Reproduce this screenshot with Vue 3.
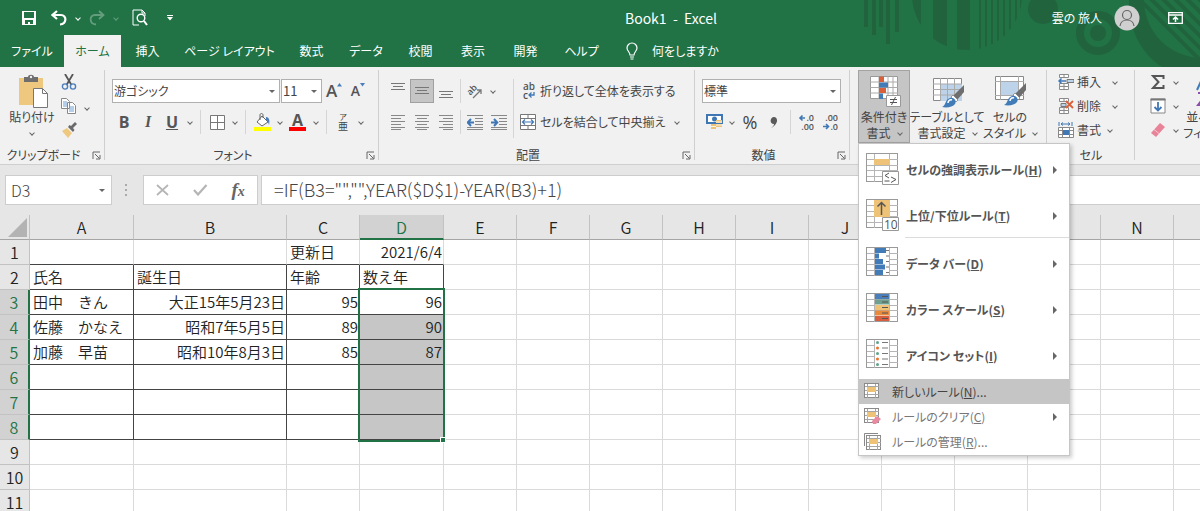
<script setup>
import { ref } from "vue";

const tabs = ["ファイル", "ホーム", "挿入", "ページ レイアウト", "数式", "データ", "校閲", "表示", "開発", "ヘルプ"];
const activeTab = ref("ホーム");

const fontName = ref("游ゴシック");
const fontSize = ref("11");
const numberFormat = ref("標準");
const nameBox = ref("D3");
const formula = ref('=IF(B3="","",YEAR($D$1)-YEAR(B3)+1)');

// 条件付き書式メニュー
const bigItems = [
  { id: "highlight", label: "セルの強調表示ルール", key: "H" },
  { id: "rank", label: "上位/下位ルール", key: "T", divider: true },
  { id: "bars", label: "データ バー", key: "D" },
  { id: "scale", label: "カラー スケール", key: "S" },
  { id: "icons", label: "アイコン セット", key: "I" },
];
const smallItems = [
  { id: "new", label: "新しいルール", key: "N", dots: true, active: true },
  { id: "clear", label: "ルールのクリア", key: "C", arrow: true },
  { id: "manage", label: "ルールの管理", key: "R", dots: true },
];

const cellTools = [
  { id: "insert", label: "挿入" },
  { id: "delete", label: "削除" },
  { id: "format", label: "書式" },
];

const scaleColors = ["#4a7ebb", "#6fa08f", "#efc377", "#e8893c", "#d75f3f"];
const dotColors = ["#5fa58c", "#e8742c", "#5fa58c", "#e8742c", "#5fa58c"];
const barWidths = [11, 4, 8, 10, 8];

// シート
const columns = ["A", "B", "C", "D", "E", "F", "G", "H", "I", "J", "K", "L", "M", "N", "O"];
const sheet = {
  1: { C: "更新日", D: "2021/6/4" },
  2: { A: "氏名", B: "誕生日", C: "年齢", D: "数え年" },
  3: { A: "田中　きん", B: "大正15年5月23日", C: "95", D: "96" },
  4: { A: "佐藤　かなえ", B: "昭和7年5月5日", C: "89", D: "90" },
  5: { A: "加藤　早苗", B: "昭和10年8月3日", C: "85", D: "87" },
};

const inTable = (row, col) => row >= 2 && row <= 8 && "ABCD".includes(col);

function cellClass(row, col) {
  return {
    boxed: inTable(row, col),
    "boxed-top": row === 1 && "ABCD".includes(col),
    right: (row === 1 && col === "D") || (row >= 3 && "BCD".includes(col)),
    picked: col === "D" && row >= 4 && row <= 8,
  };
}
</script>

<template>
  <div class="excel">
    <svg class="symbols" aria-hidden="true">
      <symbol id="launcher" viewBox="0 0 9 9">
        <path d="M1 8V1h7M3 3l4.500 4.500M8 4v4H4" fill="none" stroke="#666" />
      </symbol>
      <symbol id="grid" viewBox="0 0 34 34">
        <rect x=".5" y=".5" width="31" height="28" fill="#fff" stroke="#9a9a9a" />
        <path d="M8.500 1v28M23.500 1v28M1 6.500h31M1 12.500h31M1 17.500h31M1 23.500h31" stroke="#b5b5b5" fill="none" />
      </symbol>
      <symbol id="rule" viewBox="0 0 17 17">
        <rect x=".5" y=".5" width="14" height="14" fill="#fff" stroke="#8a8a8a" />
        <path d="M3.500 1v14M11.500 1v14M1 3.500h14M1 7.500h14M1 11.500h14" stroke="#a5a5a5" fill="none" />
        <rect x="3" y="4" width="9" height="5" fill="#efc377" />
      </symbol>
      <symbol id="brush" viewBox="0 0 24 24">
        <path d="M23 1v7l-7 8-4-4z" fill="#6e6e6e" />
        <path d="M12 11l5 5-2 2-5-5z" fill="#fff" stroke="#777" stroke-width=".7" />
        <path d="M1 23c4-1 3-8 8-9 4-1 7 3 5 6-2 3-8 4-13 3z" fill="#417bb8" />
        <path d="M7 19c0-2 2-4 4-3" stroke="#fff" stroke-width="1.500" fill="none" />
      </symbol>
      <symbol id="cells" viewBox="0 0 10 16">
        <path d="M.5.5h9v3h-9zM.5 12.500h9v3h-9zM.5 9.500h9v3M5 .5v3M5 9.500v6M.5 9.500v3" stroke="#8a8a8a" fill="#fff" />
      </symbol>
    </svg>

    <header class="top">
      <svg class="art" viewBox="0 0 360 67" aria-hidden="true">
        <defs>
          <clipPath id="disc"><circle cx="127" cy="-5" r="55" /></clipPath>
          <clipPath id="bowl"><circle cx="362" cy="0" r="58" /></clipPath>
        </defs>
        <g fill="#21633d">
          <path d="M24 0h4v27h-4zM32 0h4v35h-4zM39 0h4v27h-4zM46 0h4v44h-4zM55 0h4v32h-4z" />
          <g clip-path="url(#disc)">
            <path d="M70 0h11v28H70zM93 0h14v60H93zM117 0h13v60h-13zM139 0h2v60h-2zM145 0h2v60h-2zM151 0h2v60h-2zM157 0h2v60h-2zM163 0h2v60h-2zM169 0h2v60h-2zM175 0h2v60h-2zM180 0h2v60h-2z" />
          </g>
          <circle cx="203" cy="9" r="15" />
          <circle cx="258" cy="33" r="8" />
          <path d="M289 0h71v67h-38c-22-14-34-40-33-67z" />
        </g>
        <circle cx="258" cy="33" r="18" fill="none" stroke="#21633d" stroke-width="8" />
        <circle cx="362" cy="0" r="58" fill="#217346" />
        <g clip-path="url(#bowl)" stroke="#21633d" stroke-width="4">
          <path d="M300 0l70 70M310-2l70 70M320-4l70 70M330-6l70 70M340-8l70 70M350-10l70 70" />
        </g>
      </svg>

      <div class="titlebar">
        <div class="quick">
          <button class="q" aria-label="上書き保存">
            <svg width="16" height="16" viewBox="0 0 16 16">
              <path d="M1 1h14v14H1z" fill="#fff" />
              <path d="M3 2h10v6H3zM4 10h8v4H9v-2H7v2H4z" fill="#217346" />
            </svg>
          </button>
          <button class="q undo" aria-label="元に戻す">
            <svg width="16" height="16" viewBox="0 0 16 16">
              <path d="M6 1L1.500 5 6 9M2 5h8c6 0 6 9-1 9.500" fill="none" stroke="#fff" stroke-width="2.200" />
            </svg>
          </button>
          <button class="chev light" aria-label="元に戻す履歴"></button>
          <button class="q faded" aria-label="やり直し">
            <svg width="16" height="16" viewBox="0 0 16 16">
              <path d="M10 1l4.500 4L10 9M14 5H6c-6 0-6 9 1 9.500" fill="none" stroke="#fff" stroke-width="1.800" />
            </svg>
          </button>
          <button class="chev light faded" aria-label="やり直し履歴"></button>
          <button class="q preview" aria-label="印刷プレビュー">
            <svg width="16" height="17" viewBox="0 0 16 17">
              <path d="M7 16H1V1h9l3 3v3M10 1v3h3" fill="none" stroke="#fff" />
              <circle cx="9" cy="9" r="3.800" fill="none" stroke="#fff" stroke-width="1.400" />
              <path d="M12 12l3 4" stroke="#fff" stroke-width="2" />
            </svg>
          </button>
          <button class="q" aria-label="クイック アクセス ツール バーのユーザー設定">
            <svg width="6" height="6" viewBox="0 0 6 6"><path d="M0 0h6v1H0zM0 2h6L3 5.500z" fill="#fff" /></svg>
          </button>
        </div>
        <h1>Book1&nbsp; -&nbsp; Excel</h1>
        <div class="account">
          <span>雲の 旅人</span>
          <svg width="26" height="26" viewBox="0 0 26 26">
            <circle cx="13" cy="13" r="12.500" fill="#d0d0d0" />
            <circle cx="13" cy="10" r="4.500" fill="none" stroke="#666" stroke-width="1.200" />
            <path d="M6 21c1-8 13-8 14 0" fill="none" stroke="#666" stroke-width="1.200" />
          </svg>
          <button class="q" aria-label="リボンの表示オプション">
            <svg width="15" height="12" viewBox="0 0 15 12">
              <path d="M.7.7h13.600v10.600H.7zM1 3h13" fill="none" stroke="#fff" stroke-width="1.300" />
              <path d="M7.500 10V5M5 7.500L7.500 5 10 7.500" fill="none" stroke="#fff" stroke-width="1.500" />
            </svg>
          </button>
        </div>
      </div>

      <nav class="tabs">
        <button
          v-for="tab in tabs"
          :key="tab"
          :class="['tab', { active: tab === activeTab }]"
          @click="activeTab = tab"
        >
          {{ tab }}
        </button>
        <button class="tell">
          <svg width="12" height="18" viewBox="0 0 12 18">
            <path d="M4 13c0-3-3-4-3-7a5 5 0 0 1 10 0c0 3-3 4-3 7zM4 15h4M4.500 17h3" fill="none" stroke="#fff" stroke-width="1.200" />
          </svg>
          何をしますか
        </button>
      </nav>
    </header>

    <section class="ribbon">
      <div class="group clipboard">
        <div class="body stack">
          <button class="paste">
            <svg width="32" height="34" viewBox="0 0 32 34">
              <path d="M3 4h24v27H3z" fill="#efc880" />
              <path d="M8 3h4c0-3 6-3 6 0h4v5H8z" fill="#6e6e6e" />
              <circle cx="15" cy="3" r="1.200" fill="#f1f1f1" />
              <path d="M17.500 14.500h9l5 5v14h-14z" fill="#fff" stroke="#777" />
              <path d="M26.500 14.500v5h5" fill="none" stroke="#777" />
            </svg>
            <span>貼り付け</span>
            <i class="down"></i>
          </button>
          <div class="minis">
            <button class="tool" aria-label="切り取り">
              <svg width="16" height="16" viewBox="0 0 16 16">
                <path d="M4 0l6.500 11M12 0L5.500 11" stroke="#555" stroke-width="1.800" />
                <circle cx="4" cy="12.500" r="2.600" fill="none" stroke="#4a7ebb" stroke-width="1.400" />
                <circle cx="12" cy="12.500" r="2.600" fill="none" stroke="#4a7ebb" stroke-width="1.400" />
              </svg>
            </button>
            <button class="tool" aria-label="コピー">
              <svg width="16" height="16" viewBox="0 0 16 16">
                <path d="M.5.5h5l3 3v7h-8zM6.500 4.500h5l3 3v8h-8z" fill="#fff" stroke="#888" />
                <path d="M2 4h4M2 6h4M2 8h4M8 9h5M8 11h5M8 13h5" stroke="#6b9bd1" />
              </svg>
            </button>
            <button class="tool" aria-label="書式のコピー/貼り付け">
              <svg width="16" height="16" viewBox="0 0 16 16">
                <path d="M1 9l5-3 5 5-4 5z" fill="#efc880" />
                <path d="M7 5l5 5 1.500-2-1.500-2 4-4-2-2-4 4L8.500 3z" fill="#6a6a6a" />
              </svg>
            </button>
          </div>
          <button class="chev mid" aria-label="コピーのオプション"></button>
        </div>
        <footer>
          <span>クリップボード</span>
          <button class="launch" aria-label="クリップボードの設定"><svg width="9" height="9"><use href="#launcher" /></svg></button>
        </footer>
      </div>

      <div class="group font">
        <div class="body lines">
          <div class="line">
            <label class="combo wide">
              <select v-model="fontName" aria-label="フォント"><option>游ゴシック</option></select>
            </label>
            <label class="combo narrow">
              <select v-model="fontSize" aria-label="フォント サイズ"><option>11</option></select>
            </label>
            <button class="tool grow" aria-label="フォント サイズの拡大">
              A<svg width="5" height="4" viewBox="0 0 5 4"><path d="M0 3.500h5L2.500 0z" fill="#4a7ebb" /></svg>
            </button>
            <button class="tool grow small" aria-label="フォント サイズの縮小">
              A<svg width="5" height="4" viewBox="0 0 5 4"><path d="M0 0h5L2.500 3.500z" fill="#4a7ebb" /></svg>
            </button>
          </div>
          <div class="line">
            <button class="tool bold">B</button>
            <button class="tool italic">I</button>
            <button class="tool under">U</button>
            <button class="chev" aria-label="下線の種類"></button>
            <i class="sep"></i>
            <button class="tool" aria-label="罫線">
              <svg width="15" height="15" viewBox="0 0 15 15"><path d="M.5.5h14v14H.5zM7.500 0v15M0 7.500h15" fill="#fff" stroke="#777" /></svg>
            </button>
            <button class="chev" aria-label="罫線の種類"></button>
            <i class="sep"></i>
            <button class="tool" aria-label="塗りつぶしの色">
              <svg width="17" height="18" viewBox="0 0 17 18">
                <path d="M8 3l6 6-6 4-5-4z" fill="#fff" stroke="#666" />
                <path d="M6 7V2c0-2 3-2 3 0v3" fill="none" stroke="#666" />
                <path d="M12 4c3 0 4 3 3 8-1-3-1-4-3-5z" fill="#4a7ebb" />
                <path d="M0 14h17v4H0z" fill="#ff0" />
              </svg>
            </button>
            <button class="chev" aria-label="塗りつぶしの色の選択"></button>
            <button class="tool color" aria-label="フォントの色">A</button>
            <button class="chev" aria-label="フォントの色の選択"></button>
            <i class="sep"></i>
            <button class="tool ruby"><small>ア</small><span>亜</span></button>
            <button class="chev" aria-label="ふりがなの設定"></button>
          </div>
        </div>
        <footer>
          <span>フォント</span>
          <button class="launch" aria-label="フォントの設定"><svg width="9" height="9"><use href="#launcher" /></svg></button>
        </footer>
      </div>

      <div class="group align">
        <div class="body split">
          <div class="lines">
            <div class="line">
              <button class="tool" aria-label="上揃え">
                <svg width="14" height="16" viewBox="0 0 14 16"><path d="M0 .5h14M2 3.500h10M0 6.500h14" stroke="#777" /></svg>
              </button>
              <button class="tool on" aria-label="上下中央揃え">
                <svg width="14" height="16" viewBox="0 0 14 16"><path d="M0 4.500h14M2 7.500h10M0 10.500h14" stroke="#777" /></svg>
              </button>
              <button class="tool" aria-label="下揃え">
                <svg width="14" height="16" viewBox="0 0 14 16"><path d="M0 8.500h14M2 11.500h10M0 14.500h14" stroke="#777" /></svg>
              </button>
              <i class="sep"></i>
              <button class="tool" aria-label="方向">
                <svg class="loose" width="15" height="15" viewBox="0 0 15 15">
                  <text x="-1" y="8" transform="rotate(-45 5 6)" class="ab">ab</text>
                  <path d="M5 14l8-8M13 10V6H9" fill="none" stroke="#777" stroke-width="1.300" />
                </svg>
              </button>
              <button class="chev" aria-label="方向の選択"></button>
            </div>
            <div class="line">
              <button class="tool" aria-label="左揃え">
                <svg width="14" height="15" viewBox="0 0 14 15"><path d="M0 .5h14M0 3.500h10M0 6.500h14M0 9.500h10M0 12.500h14M0 14.500h10" stroke="#888" /></svg>
              </button>
              <button class="tool" aria-label="中央揃え">
                <svg width="14" height="15" viewBox="0 0 14 15"><path d="M0 .5h14M2 3.500h10M0 6.500h14M2 9.500h10M0 12.500h14M2 14.500h10" stroke="#888" /></svg>
              </button>
              <button class="tool" aria-label="右揃え">
                <svg width="14" height="15" viewBox="0 0 14 15"><path d="M0 .5h14M4 3.500h10M0 6.500h14M4 9.500h10M0 12.500h14M4 14.500h10" stroke="#888" /></svg>
              </button>
              <i class="sep"></i>
              <button class="tool" aria-label="インデントを減らす">
                <svg width="16" height="15" viewBox="0 0 16 15">
                  <path d="M0 .5h16M8 3.500h8M8 6.500h8M8 9.500h8M0 12.500h16M0 14.500h16" stroke="#888" />
                  <path d="M7 7.500H1M4 4L.7 7.500 4 11" fill="none" stroke="#3f77b5" stroke-width="2" />
                </svg>
              </button>
              <button class="tool" aria-label="インデントを増やす">
                <svg width="16" height="15" viewBox="0 0 16 15">
                  <path d="M0 .5h16M8 3.500h8M8 6.500h8M8 9.500h8M0 12.500h16M0 14.500h16" stroke="#888" />
                  <path d="M0 7.500h6M3 4l3.300 3.500L3 11" fill="none" stroke="#3f77b5" stroke-width="2" />
                </svg>
              </button>
            </div>
          </div>
          <i class="sep tall"></i>
          <div class="lines">
            <button class="text-tool">
              <svg class="loose" width="16" height="16" viewBox="0 0 16 16">
                <text x="3" y="7" class="wrap">ab</text><text x="3" y="16" class="wrap">c</text>
                <path d="M14 9v3H9M11.500 9.500L9 12l2.500 2.500" fill="none" stroke="#3f77b5" stroke-width="1.300" />
              </svg>
              折り返して全体を表示する
            </button>
            <div class="line">
              <button class="text-tool">
                <svg width="16" height="16" viewBox="0 0 16 16">
                  <path d="M.5.5h15v15H.5zM0 4.500h16M0 11.500h16M8 0v4M8 12v4" fill="#fff" stroke="#777" />
                  <path d="M2 8h12M5 5.500L2.500 8 5 10.500M11 5.500L13.500 8 11 10.500" fill="none" stroke="#3f77b5" stroke-width="1.200" />
                </svg>
                セルを結合して中央揃え
              </button>
              <button class="chev" aria-label="結合のオプション"></button>
            </div>
          </div>
        </div>
        <footer>
          <span>配置</span>
          <button class="launch" aria-label="配置の設定"><svg width="9" height="9"><use href="#launcher" /></svg></button>
        </footer>
      </div>

      <div class="group number">
        <div class="body lines">
          <label class="combo format">
            <select v-model="numberFormat" aria-label="表示形式"><option>標準</option></select>
          </label>
          <div class="line">
            <button class="tool" aria-label="通貨表示形式">
              <svg width="17" height="16" viewBox="0 0 17 16">
                <path d="M1 1h15v8H1z" fill="#fff" stroke="#3f77b5" stroke-width="2" />
                <circle cx="8.500" cy="5" r="2.500" fill="#3f77b5" />
                <path d="M10 6h6v3h-6zM10 10h6v3h-6zM5 10h5v5H5z" fill="#efc377" />
                <path d="M10 8h6M10 11h6M5 12.500h5" stroke="#fff" stroke-width=".8" />
              </svg>
            </button>
            <button class="chev" aria-label="通貨の選択"></button>
            <button class="tool percent">%</button>
            <button class="tool" aria-label="桁区切りスタイル">
              <svg width="8" height="12" viewBox="0 0 8 12"><path d="M1 12c2-1 3-3 3-4-5 0-4-7 0-7s5 7-3 11z" fill="#5a5a5a" /></svg>
            </button>
            <i class="sep"></i>
            <button class="tool" aria-label="小数点以下の表示桁数を増やす">
              <svg class="loose" width="16" height="17" viewBox="0 0 16 17">
                <text x="15" y="7" class="dec">.0</text><text x="15" y="16" class="dec">.00</text>
                <path d="M6 4H1M3.500 1.500L1 4l2.500 2.500" fill="none" stroke="#3f77b5" stroke-width="1.600" />
              </svg>
            </button>
            <button class="tool" aria-label="小数点以下の表示桁数を減らす">
              <svg class="loose" width="16" height="17" viewBox="0 0 16 17">
                <text x="15" y="7" class="dec">.00</text><text x="15" y="16" class="dec">.0</text>
                <path d="M0 12.500h5M3 10l2.500 2.500L3 15" fill="none" stroke="#3f77b5" stroke-width="1.600" />
              </svg>
            </button>
          </div>
        </div>
        <footer>
          <span>数値</span>
          <button class="launch" aria-label="数値の設定"><svg width="9" height="9"><use href="#launcher" /></svg></button>
        </footer>
      </div>

      <div class="group styles">
        <div class="body stack">
          <div class="cf">
            <button class="big pressed" aria-haspopup="menu" aria-expanded="true">
              <svg width="40" height="36" viewBox="0 0 40 36">
                <path d="M6.500 3.500h27v22h-27z" fill="#fff" stroke="#999" />
                <path d="M6 9h28M6 14.500h28M6 20h28M15 3v23M24 3v23M29 3v23" stroke="#aaa" />
                <path d="M15 3.500h5V9h-5zM15 15h7v5h-7z" fill="#d9603b" />
                <path d="M15 9.500h9v5h-9zM15 20.500h4V26h-4z" fill="#417bb8" />
                <path d="M22.500 22.500h14v11h-14z" fill="#fff" stroke="#999" />
                <path d="M26 26.500h7M26 29.500h7M31.500 24l-4 8" stroke="#555" />
              </svg>
              <span>条件付き<br />書式<i class="down"></i></span>
            </button>

            <ul class="menu" role="menu">
              <li v-for="item in bigItems" :key="item.id" :class="['entry', { divider: item.divider }]">
                <button role="menuitem">
                  <svg width="34" height="34" viewBox="0 0 34 34">
                    <use href="#grid" width="34" height="34" />
                    <template v-if="item.id === 'highlight'">
                      <path d="M8 6h16v6H8z" fill="#efc377" />
                      <path d="M16.500 18.500h16v13h-16z" fill="#fff" stroke="#999" />
                      <path d="M23 20l-4 2.500 4 2.500M18.500 28h5M25 24l5 2.500-5 3" fill="none" stroke="#555" />
                    </template>
                    <template v-else-if="item.id === 'rank'">
                      <path d="M8 1h16v17H8z" fill="#efc377" />
                      <path d="M15.500 16V4M11.500 7.500l4-4 4 4" fill="none" stroke="#555" stroke-width="1.500" />
                      <path d="M16.500 18.500h16v13h-16z" fill="#fff" stroke="#999" />
                      <text x="18" y="30" class="ten">10</text>
                    </template>
                    <template v-else-if="item.id === 'bars'">
                      <rect x="9" y="1" width="14" height="27" fill="#fff" />
                      <g v-for="(w, i) in barWidths" :key="i">
                        <rect x="9" :y="1 + i * 5.5" :width="w" height="5" fill="#417bb8" />
                        <path :d="`M20 ${3.5 + i * 5.5}h3`" stroke="#777" />
                      </g>
                    </template>
                    <template v-else-if="item.id === 'scale'">
                      <g v-for="(c, i) in scaleColors" :key="c">
                        <rect x="9" :y="1 + i * 5.5" width="14" height="5" :fill="c" />
                        <path :d="`M16 ${3.5 + i * 5.5}h6`" stroke="#555" />
                      </g>
                    </template>
                    <template v-else>
                      <rect x="9" y="1" width="14" height="27" fill="#fff" />
                      <g v-for="(c, i) in dotColors" :key="i">
                        <circle cx="11.500" :cy="3.5 + i * 5.5" r="1.500" :fill="c" />
                        <path :d="`M16 ${3.5 + i * 5.5}h6`" stroke="#777" />
                      </g>
                    </template>
                  </svg>
                  <span>{{ item.label }}(<u>{{ item.key }}</u>)</span>
                  <i class="side"></i>
                </button>
              </li>
              <li v-for="item in smallItems" :key="item.id" :class="['entry', 'slim', { active: item.active }]">
                <button role="menuitem">
                  <svg width="17" height="17" viewBox="0 0 17 17">
                    <path v-if="item.id === 'manage'" d="M.5 13V.5H14" fill="none" stroke="#888" />
                    <use href="#rule" :x="item.id === 'manage' ? 2 : 0" :y="item.id === 'manage' ? 2 : 0" width="17" height="17" />
                    <path v-if="item.id === 'clear'" d="M8 13l5-5 4 3-5 5-3 0z" fill="#e98aa0" />
                  </svg>
                  <span>{{ item.label }}(<u>{{ item.key }}</u>){{ item.dots ? "..." : "" }}</span>
                  <i v-if="item.arrow" class="side"></i>
                </button>
              </li>
            </ul>
          </div>
          <button class="big table">
            <svg width="40" height="36" viewBox="0 0 40 36">
              <path d="M6.500 5.500h28v22h-28z" fill="#fff" stroke="#888" />
              <path d="M14 11h21v17H14z" fill="#bdd3ea" />
              <path d="M6 11h29M6 16.500h29M6 22h29M13.500 5v23M20.500 5v23M27.500 5v23" stroke="#aaa" />
              <use href="#brush" x="14" y="11" width="24" height="24" />
            </svg>
            <span>テーブルとして<br />書式設定<i class="down"></i></span>
          </button>
          <button class="big">
            <svg width="40" height="36" viewBox="0 0 40 36">
              <path d="M5.500 3.500h28v23h-28z" fill="#fff" stroke="#888" />
              <path d="M11 9h18v13H11z" fill="#bdd3ea" />
              <path d="M5 8.500h29M5 22.500h29M10.500 3v24M28.500 3v24" stroke="#aaa" />
              <use href="#brush" x="13" y="9" width="24" height="24" />
            </svg>
            <span>セルの<br />スタイル<i class="down"></i></span>
          </button>
        </div>
      </div>

      <div class="group cells">
        <div class="body minis">
          <button v-for="tool in cellTools" :key="tool.id" :class="['cell-tool', tool.id]">
            <svg width="16" height="16" viewBox="0 0 16 16">
              <template v-if="tool.id === 'insert'">
                <use href="#cells" x="1" width="10" height="16" />
                <path d="M9 5.500h7v3H9z" fill="#bdd3ea" stroke="#777" />
                <path d="M8 7H1M3.500 4.500L1 7l2.500 2.500" fill="none" stroke="#3f77b5" stroke-width="1.500" />
              </template>
              <template v-else-if="tool.id === 'delete'">
                <use href="#cells" x="1" width="10" height="16" />
                <path d="M3 5.500h5v3H3z" fill="#bdd3ea" stroke="#777" />
                <path d="M8 3l7 7M15 3l-7 7" stroke="#d9603b" stroke-width="1.800" />
              </template>
              <template v-else>
                <path d="M1 0v4M14 0v4M3 2h9M5 .5L3 2l2 1.500M10 .5L12 2l-2 1.500" fill="none" stroke="#3f77b5" />
                <path d="M.5 5.500h15v10H.5zM0 8.500h16M0 12.500h16M4.500 5v11M11.500 5v11" fill="#fff" stroke="#888" />
                <path d="M5 8h6v5H5z" fill="#3f77b5" />
              </template>
            </svg>
            {{ tool.label }}<i class="down"></i>
          </button>
        </div>
        <footer><span>セル</span></footer>
      </div>

      <div class="group edit">
        <div class="body stack">
          <div class="minis">
            <button class="edit-tool" aria-label="合計">
              <svg width="16" height="16" viewBox="0 0 16 16"><path d="M13.500 5V2H3l5.500 6L3 14h10.500v-3" fill="none" stroke="#555" stroke-width="2" /></svg>
              <i class="down"></i>
            </button>
            <button class="edit-tool" aria-label="フィル">
              <svg width="16" height="16" viewBox="0 0 16 16">
                <path d="M1 1h14v14H1z" fill="#fff" stroke="#888" /><path d="M.5.5h15v2H.5z" fill="#777" />
                <path d="M8 4v8M4.500 9L8 12.500 11.500 9" fill="none" stroke="#3f77b5" stroke-width="1.800" />
              </svg>
              <i class="down"></i>
            </button>
            <button class="edit-tool" aria-label="クリア">
              <svg width="16" height="16" viewBox="0 0 16 16">
                <path d="M10 1l5 4-9 10-5-4z" fill="#e98498" /><path d="M4 7.500l5 4" stroke="#f7c5cf" />
              </svg>
              <i class="down"></i>
            </button>
          </div>
          <button class="big sort">
            <svg width="40" height="36" viewBox="0 0 40 36">
              <path d="M2 17L8 4l5 13M4 12h8" fill="none" stroke="#417bb8" stroke-width="2" />
              <path d="M3 20h9L3 32h9" fill="none" stroke="#8b4fa8" stroke-width="2" />
            </svg>
            <span>並べ替えと<br />フィルター<i class="down"></i></span>
          </button>
        </div>
      </div>
    </section>

    <section class="formula-bar">
      <div class="name-box">
        <input v-model="nameBox" aria-label="名前ボックス" />
        <button aria-label="名前の一覧"><i class="caret"></i></button>
      </div>
      <i class="dots"></i>
      <div class="fx">
        <button aria-label="キャンセル">
          <svg width="14" height="12" viewBox="0 0 14 12"><path d="M1 1l11 10M12 1L1 11" stroke="#b5b5b5" stroke-width="1.700" /></svg>
        </button>
        <button aria-label="入力">
          <svg width="15" height="12" viewBox="0 0 15 12"><path d="M1 6l4 4.500L13.500 1" fill="none" stroke="#b5b5b5" stroke-width="2.200" /></svg>
        </button>
        <button class="fn">f<small>x</small></button>
      </div>
      <input v-model="formula" class="formula" aria-label="数式バー" />
    </section>

    <main class="sheet">
      <table>
        <colgroup>
          <col class="w-head" />
          <col v-for="col in columns" :key="col" :class="'w-' + col.toLowerCase()" />
        </colgroup>
        <thead>
          <tr>
            <th class="corner">
              <svg width="19" height="19" viewBox="0 0 19 19"><path d="M19 0v19H0z" fill="#b3b3b3" /></svg>
            </th>
            <th v-for="col in columns" :key="col" :class="{ current: col === 'D' }">{{ col }}</th>
          </tr>
        </thead>
        <tbody>
          <tr v-for="row in 11" :key="row">
            <th :class="{ current: row >= 3 && row <= 8 }">{{ row }}</th>
            <td v-for="col in columns" :key="col" :class="cellClass(row, col)">
              {{ sheet[row]?.[col] }}
              <!-- 選択範囲 D3:D8 の枠 -->
              <div v-if="row === 3 && col === 'D'" class="selection"></div>
            </td>
          </tr>
        </tbody>
      </table>
    </main>
  </div>
</template>

<style>
body {
  margin: 0;
}
</style>

<style scoped>
.excel {
  height: 100vh;
  overflow: hidden;
  display: flex;
  flex-direction: column;
  background: #e6e6e6;
  color: #444;
  font: 12px/16px "Noto Sans CJK JP", "Liberation Sans", sans-serif;
  font-feature-settings: "palt";
}

.symbols {
  position: absolute;
  width: 0;
  height: 0;
}

button {
  display: flex;
  align-items: center;
  justify-content: center;
  flex: none;
  padding: 0;
  border: 0;
  background: none;
  color: inherit;
  font: inherit;
  font-feature-settings: inherit;
  white-space: nowrap;
}

input,
select {
  box-sizing: border-box;
  min-width: 0;
  margin: 0;
  padding: 0;
  border: 0;
  outline: 0;
  background: none;
  color: inherit;
  font: inherit;
  font-feature-settings: inherit;
}

svg {
  flex: none;
  display: block;
}

.loose {
  overflow: visible;
}

/* タイトル バー */
.top {
  position: relative;
  background: #217346;
  color: #fff;
}

.art {
  position: absolute;
  top: 0;
  right: 0;
  width: 360px;
  height: 67px;
}

.titlebar {
  position: relative;
  display: grid;
  grid-template-columns: 1fr auto 1fr;
  align-items: center;
  height: 35px;
}

.quick {
  display: flex;
  align-items: center;
  padding-left: 16px;
}

.q {
  width: 26px;
  height: 26px;
}

.q.undo {
  margin-left: 4px;
}

.q.preview {
  margin: 0 4px 0 5px;
}

.faded {
  opacity: 0.3;
}

h1 {
  margin: 0;
  padding-left: 142px;
  font-size: 14px;
  font-weight: 400;
  line-height: 18px;
}

.account {
  display: flex;
  align-items: center;
  justify-content: flex-end;
  gap: 12px;
  padding-right: 12px;
}

.account .q {
  margin-left: 10px;
}

.tabs {
  position: relative;
  display: grid;
  grid-template-columns: 64px 57px 53px 111px 53px 56px 53px 52px 53px 59px auto;
  justify-content: start;
  height: 32px;
}

.tab.active {
  background: #f1f1f1;
  color: #217346;
}

.tell {
  gap: 14px;
  padding-left: 15px;
}

/* リボン */
.ribbon {
  display: flex;
  padding-top: 3px;
  border-bottom: 1px solid #cfcfcf;
  background: #f1f1f1;
}

.group {
  display: flex;
  flex-direction: column;
  flex: none;
  box-sizing: border-box;
  height: 94px;
  background: linear-gradient(#cfcfcf, #cfcfcf) right top / 1px calc(100% - 4px) no-repeat;
}

.clipboard {
  width: 105px;
}

.font {
  width: 274px;
}

.align {
  width: 316px;
}

.number {
  width: 155px;
}

.styles {
  width: 197px;
}

.cells {
  width: 88px;
}

.edit {
  width: 180px;
}

.body {
  flex: 1;
  padding-left: 7px;
}

.stack,
.split {
  display: flex;
}

.lines {
  display: flex;
  flex-direction: column;
  gap: 7px;
}

.body.lines,
.body.split {
  padding-top: 9px;
}

.line {
  display: flex;
  align-items: center;
  height: 24px;
}

.group footer {
  display: flex;
  align-items: center;
  height: 18px;
}

.group footer span {
  flex: 1;
  text-align: center;
}

.launch {
  width: 18px;
  height: 18px;
}

.tool {
  width: 24px;
  height: 24px;
}

.tool.on {
  box-sizing: border-box;
  border: 1px solid #a0a0a0;
  background: #c5c5c5;
}

.chev {
  width: 12px;
  height: 24px;
}

.chev::before,
.down {
  content: "";
  display: inline-block;
  box-sizing: border-box;
  width: 4px;
  height: 4px;
  border: solid #666;
  border-width: 0 1px 1px 0;
  transform: rotate(45deg);
}

.chev.light::before {
  border-color: #fff;
}

.chev.mid {
  align-self: center;
}

.sep {
  width: 1px;
  height: 24px;
  margin: 0 4px;
  background: #d5d5d5;
}

.align .sep {
  margin: 0 2px;
}

.sep.tall {
  height: 59px;
}

.paste {
  flex-direction: column;
  justify-content: flex-start;
  width: 50px;
  padding-top: 4px;
}

.paste span {
  padding: 1px 0 6px;
}

.minis {
  display: flex;
  flex-direction: column;
}

.combo {
  display: flex;
  align-items: center;
  position: relative;
  box-sizing: border-box;
  height: 24px;
  border: 1px solid #b0b0b0;
  background: #fff;
}

.combo select {
  flex: 1;
  height: 22px;
  padding: 0 1px;
  appearance: none;
}

.combo::after,
.caret {
  content: "";
  border: 3px solid transparent;
  border-top-color: #666;
  border-bottom: 0;
}

.combo::after {
  position: absolute;
  right: 4px;
  pointer-events: none;
}

.combo.wide {
  width: 168px;
  margin-right: 1px;
}

.combo.narrow {
  width: 41px;
  font-size: 13px;
}

.combo.format {
  width: 139px;
}

.grow {
  align-items: flex-start;
  color: #555;
  font: 600 17px/24px "Open Sans", sans-serif;
}

.grow svg {
  margin-top: 4px;
}

.grow.small {
  font-size: 14px;
}

.bold,
.italic,
.under,
.color {
  color: #555;
  font: 700 16px/22px "Open Sans", sans-serif;
}

.italic {
  font-family: "Liberation Serif", serif;
  font-style: italic;
}

.under {
  text-decoration: underline;
}

.color {
  width: 17px;
  height: 18px;
  margin: 0 4px 0 3px;
  border-bottom: 4px solid #f00;
  box-sizing: border-box;
  line-height: 14px;
}

.ruby {
  flex-direction: column;
  font-size: 10px;
  line-height: 10px;
}

.ruby small {
  font-size: 8px;
  line-height: 8px;
}

.ab,
.wrap,
.dec {
  fill: #555;
  font: 600 9px "Open Sans", sans-serif;
}

.wrap {
  font-size: 10px;
}

.dec {
  text-anchor: end;
}

.ten {
  fill: #555;
  font: 12px "Open Sans", sans-serif;
}

.percent {
  font: 400 18px/24px "Open Sans", sans-serif;
}

.text-tool {
  justify-content: flex-start;
  gap: 4px;
  height: 24px;
  padding-left: 4px;
}

.text-tool + .chev {
  margin-left: 6px;
}

.big {
  flex-direction: column;
  justify-content: flex-start;
  box-sizing: border-box;
  width: 52px;
  height: 73px;
  border: 1px solid transparent;
  padding-top: 2px;
  text-align: center;
}

.big.pressed {
  border-color: #a3a3a3;
  background: #c5c5c5;
}

.big.table {
  width: 74px;
}

.styles .body {
  padding-left: 8px;
}

.big .down {
  margin: 0 0 3px 7px;
}

.cells .body {
  padding-left: 11px;
}

.cell-tool {
  justify-content: flex-start;
  gap: 3px;
  height: 24px;
}

.cell-tool .down {
  margin-left: 9px;
}

.cell-tool.format .down {
  margin-left: 4px;
}

.edit .body {
  padding-left: 11px;
}

.edit-tool {
  gap: 8px;
  width: 36px;
  height: 24px;
}

.sort {
  width: 66px;
}

/* ドロップダウン メニュー */
.cf {
  position: relative;
}

.menu {
  position: absolute;
  z-index: 2;
  top: 73px;
  left: 0;
  box-sizing: border-box;
  width: 212px;
  margin: 0;
  padding: 3px 0 1px;
  border: 1px solid #c6c6c6;
  background: #fff;
  box-shadow: 2px 2px 4px rgba(0, 0, 0, 0.2);
  list-style: none;
}

.entry button {
  display: grid;
  grid-template-columns: 34px 1fr 16px;
  justify-content: stretch;
  justify-items: start;
  gap: 6px;
  width: 100%;
  height: 46px;
  padding-left: 7px;
  color: #555;
  font-weight: 700;
}

.entry.divider {
  padding-bottom: 2px;
  background: linear-gradient(#dcdcdc, #dcdcdc) right bottom 3px / 164px 1px no-repeat;
}

.entry.slim button {
  grid-template-columns: 17px 1fr 16px;
  gap: 11px;
  height: 25px;
  padding-left: 5px;
  color: #777;
  font-weight: 400;
}

.entry.slim.active {
  background: #c5c5c5;
}

.entry.slim.active button {
  color: #444;
}

.side {
  border: 4px solid transparent;
  border-left-color: #666;
  border-right: 0;
}

/* 数式バー */
.formula-bar {
  display: flex;
  align-items: center;
  height: 50px;
  font-size: 16px;
  font-weight: 300;
}

.name-box,
.fx,
.formula {
  display: flex;
  box-sizing: border-box;
  height: 30px;
  border: 1px solid #cdcdcd;
  background: #fff;
}

.name-box {
  width: 107px;
  margin-left: 5px;
}

.name-box input {
  flex: 1;
  padding-left: 5px;
}

.name-box button {
  width: 19px;
}

.dots {
  width: 2px;
  height: 12px;
  margin: 0 16px 0 13px;
  background: repeating-linear-gradient(#aaa 0 2px, transparent 2px 5px);
}

.fx {
  width: 115px;
  margin-right: 3px;
}

.fx button {
  flex: 1;
}

.fx .fn {
  color: #666;
  font: italic 700 19px/24px "Liberation Serif", serif;
}

.fn small {
  padding-top: 4px;
  font-size: 14px;
}

.formula {
  flex: 1;
  padding: 0 0 2px 12px;
  border-right: 0;
  font-size: 18px;
  font-feature-settings: normal;
}

/* ワークシート */
.sheet {
  flex: 1;
  min-height: 0;
  overflow: hidden;
  background: #fff;
}

table {
  width: max-content;
  table-layout: fixed;
  border-spacing: 0;
  font-size: 15px;
  font-weight: 350;
  line-height: 22px;
  font-feature-settings: normal;
  color: #222;
}

col {
  width: 73px;
}

.w-head {
  width: 30px;
}

.w-a {
  width: 104px;
}

.w-b {
  width: 153px;
}

.w-c {
  width: 73px;
}

.w-d {
  width: 84px;
}

th,
td {
  box-sizing: border-box;
  height: 25px;
  padding: 0 2px 0 3px;
  border: solid #dadada;
  border-width: 0 1px 1px 0;
  white-space: nowrap;
}

th {
  padding: 0 2px;
  border-color: #c2c2c2;
  background: #e6e6e6;
  font-size: 16px;
  font-weight: 350;
}

thead th {
  border-bottom-color: #a5a5a5;
}

th.current {
  background: #d2d2d2;
  color: #217346;
}

thead .current {
  border-bottom: 2px solid #217346;
}

tbody .current {
  border-right: 2px solid #217346;
}

.corner svg {
  margin-left: 6px;
}

td.right {
  padding-right: 1px;
  text-align: right;
}

.boxed {
  border-color: #444;
}

.boxed-top {
  border-bottom-color: #444;
}

.picked {
  background: #c6c6c6;
}

td:has(.selection) {
  position: relative;
}

.selection {
  position: absolute;
  top: -2px;
  left: -2px;
  width: 83px;
  height: 150px;
  border: 2px solid #217346;
}

.selection::after {
  content: "";
  position: absolute;
  right: -3px;
  bottom: -3px;
  width: 4px;
  height: 4px;
  border: 1px solid #fff;
  background: #217346;
}
</style>
